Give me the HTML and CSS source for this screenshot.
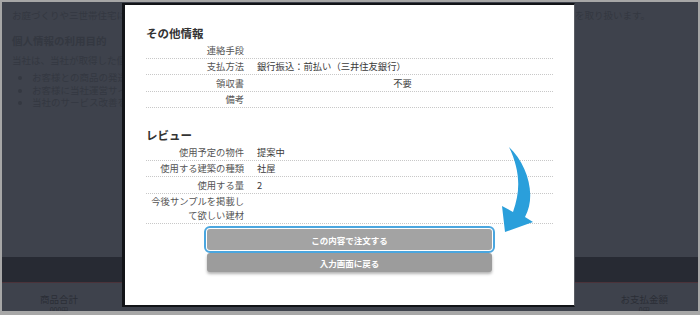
FILE: index.html
```html
<!DOCTYPE html>
<html lang="ja">
<head>
<meta charset="utf-8">
<title>確認画面</title>
<link rel="stylesheet" href="styles.css">
</head>
<body>
<div class="screen">
  <div class="page">
    <div class="intro">
      <span>お庭づくりや三世帯住宅にお役立ちな情報</span>
      <span class="intro-right">を取り扱います。</span>
    </div>
    <h2 class="page-h">個人情報の利用目的</h2>
    <p class="page-p">当社は、当社が取得した個人情報を以下の目的で利用します。</p>
    <ul class="page-list">
      <li>お客様との商品の発送に関する連絡</li>
      <li>お客様に当社運営サイトの案内</li>
      <li>当社のサービス改善を目的とした分析</li>
    </ul>
    <div class="page-rest"></div>
    <div class="band"></div>
    <div class="totals">
      <div class="total"><span>商品合計</span><small>000円</small></div>
      <div class="total"><span>お支払金額</span><small>0円</small></div>
    </div>
  </div>

  <div class="modal">
    <h3 class="sec-title">その他情報</h3>
    <div class="table">
      <div class="row"><div class="lab">連絡手段</div><div class="val"></div></div>
      <div class="row"><div class="lab">支払方法</div><div class="val">銀行振込：前払い（三井住友銀行）</div></div>
      <div class="row"><div class="lab">領収書</div><div class="val center">不要</div></div>
      <div class="row"><div class="lab">備考</div><div class="val"></div></div>
    </div>
    <h3 class="sec-title review">レビュー</h3>
    <div class="table">
      <div class="row"><div class="lab">使用予定の物件</div><div class="val">提案中</div></div>
      <div class="row"><div class="lab">使用する建築の種類</div><div class="val">社屋</div></div>
      <div class="row"><div class="lab">使用する量</div><div class="val">2</div></div>
      <div class="row"><div class="lab">今後サンプルを掲載して欲しい建材</div><div class="val"></div></div>
    </div>
    <div class="buttons">
      <button class="btn btn-focus">この内容で注文する</button>
      <button class="btn btn-back">入力画面に戻る</button>
    </div>
  </div>

  <svg class="arrow" width="50" height="100" viewBox="495 140 50 100" xmlns="http://www.w3.org/2000/svg">
    <path d="M509 147 C527 164 537 195 525 217 L533 222 L505 232 L502 206 L513 212 C521 190 520 170 509 147 Z" fill="#2a9fdb"/>
  </svg>
</div>
</body>
</html>
```

FILE: styles.css
```css
* { box-sizing: border-box; }
html, body { margin: 0; padding: 0; }
body {
  width: 700px;
  height: 315px;
  overflow: hidden;
  background: #a9a9a9;
  font-family: "Noto Sans CJK JP", "Noto Sans", sans-serif;
}
.screen {
  position: relative;
  width: 700px;
  height: 315px;
  border: 2px solid #a7a7a7;
  border-bottom-width: 4px;
  background: #3e424c;
  overflow: hidden;
}
.page {
  display: flex;
  flex-direction: column;
  height: 100%;
  color: #343841;
  font-size: 9.5px;
}
.intro {
  display: flex;
  justify-content: space-between;
  padding: 6px 48px 0 10px;
  line-height: 14px;
}
.page-h {
  margin: 12px 0 0 10px;
  font-size: 10.5px;
  font-weight: bold;
  line-height: 14px;
}
.page-p {
  margin: 5px 0 0 10px;
  line-height: 14px;
}
.page-list {
  margin: 4px 0 0 0;
  padding: 0 0 0 30px;
  line-height: 12.6px;
}
.page-rest { flex: 1; }
.band {
  height: 26px;
  background: #272a33;
  border-bottom: 1px solid #4b333a;
}
.totals {
  display: flex;
  justify-content: space-between;
  padding: 10px 30px 0 38px;
  height: 28px;
}
.total {
  display: flex;
  flex-direction: column;
  align-items: center;
  color: #2b2e36;
  font-size: 9.5px;
  line-height: 13px;
}
.total small { font-size: 7px; line-height: 8px; }

.modal {
  position: absolute;
  left: 120px;
  top: 1px;
  width: 453px;
  height: 304px;
  background: #fff;
  border-left: 3px solid #121418;
  border-top: 2px solid #121418;
  border-bottom: 2px solid #121418;
  border-right: 1px solid #5a5d64;
  padding: 20px 21px 0 21px;
}
.sec-title {
  margin: 0 0 1px 0;
  font-size: 11.5px;
  line-height: 16px;
  font-weight: bold;
  color: #333;
}
.sec-title.review { margin-top: 19px; }
.table { display: flex; flex-direction: column; }
.row {
  display: grid;
  grid-template-columns: 106px 1fr;
  border-bottom: 1px dotted #c8c8c8;
  font-size: 9.3px;
  line-height: 14px;
  color: #3a3a3a;
}
.lab {
  padding: 0.75px 8px 0.75px 3px;
  text-align: right;
  color: #555;
}
.val {
  padding: 0.75px 5px;
}
.val.center { text-align: center; }
.buttons {
  display: flex;
  flex-direction: column;
  align-items: center;
  margin-top: 5px;
}
.btn {
  width: 285px;
  border: none;
  border-radius: 3px;
  background: #a3a3a3;
  color: #fff;
  font-family: inherit;
  font-weight: bold;
  font-size: 8.5px;
  padding: 0;
}
.btn-focus {
  height: 21px;
  outline: 2px solid #4aa6df;
  outline-offset: 1px;
  position: relative;
  z-index: 1;
}
.btn-back {
  height: 19px;
  margin-top: 3px;
  background: #9c9c9c;
  box-shadow: 0 2px 3px rgba(0,0,0,0.3);
}
.arrow {
  position: absolute;
  left: 493px;
  top: 138px;
}
```
